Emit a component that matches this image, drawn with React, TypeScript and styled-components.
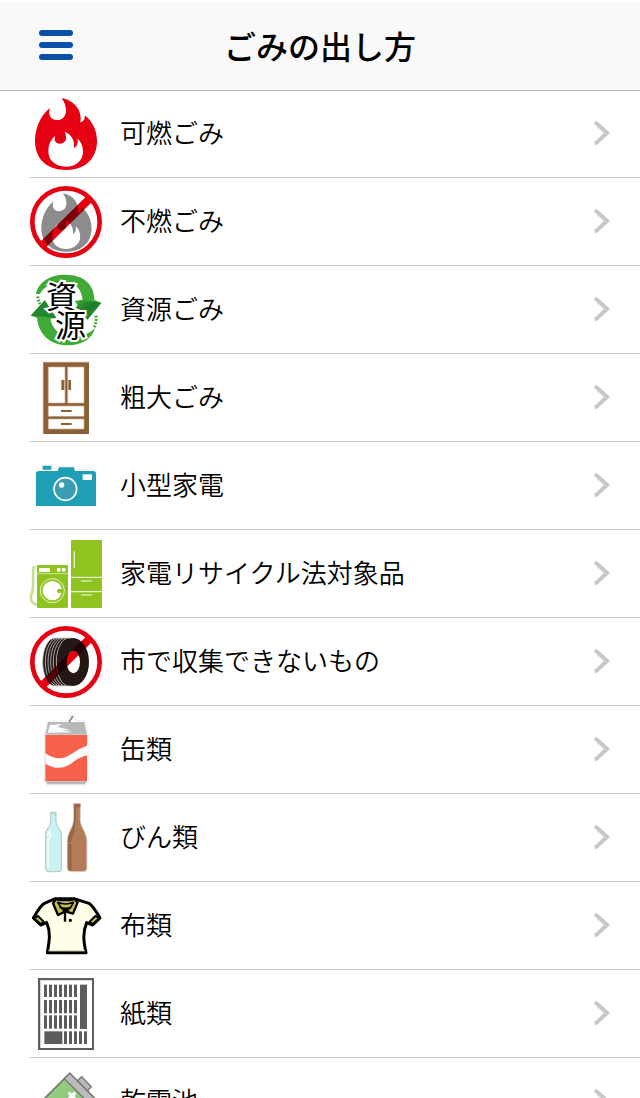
import React from 'react';
import styled, { createGlobalStyle } from 'styled-components';

const GlobalStyle = createGlobalStyle`
  *, *::before, *::after { box-sizing: border-box; }
  body {
    margin: 0;
    background: #fff;
    color: #000;
    font-family: "Noto Sans CJK JP", sans-serif;
  }
`;

const Screen = styled.div`
  display: flex;
  flex-direction: column;
  height: 100vh;
  overflow: hidden;
`;

const Header = styled.header`
  display: grid;
  grid-template-columns: 1fr auto 1fr;
  align-items: center;
  flex: none;
  height: 91px;
  padding: 0 30px 2px;
  background: #f9f9f9;
  border-top: 2px solid #fff;
  border-bottom: 1px solid #b2b2b2;
`;

const MenuButton = styled.button`
  display: flex;
  flex-direction: column;
  gap: 6px;
  width: 52px;
  padding: 9px;
  border: 0;
  background: none;
  cursor: pointer;
`;

const MenuBar = styled.span`
  height: 6px;
  border-radius: 3px;
  background: #0a50a8;
`;

const Title = styled.h1`
  margin: 0;
  font-size: 32px;
  line-height: 48px;
  font-weight: 500;
`;

const List = styled.ul`
  flex: 1;
  min-height: 0;
  margin: -1px 0 0;
  padding: 0 0 0 30px;
  list-style: none;
  overflow-y: auto;
  scrollbar-width: none;
`;

const Row = styled.li`
  border-bottom: 1px solid #c8c7cc;
`;

const RowLink = styled.a`
  display: flex;
  align-items: center;
  gap: 18px;
  padding: 8px 30px 7px 0;
  color: inherit;
  text-decoration: none;
`;

const Picture = styled.svg`
  flex: none;
  width: 72px;
  height: 72px;
  overflow: visible;
  isolation: isolate;
`;

const Label = styled.span`
  flex: 1;
  padding-bottom: 4px;
  font-size: 26px;
  line-height: 40px;
  font-weight: 350;
`;

const Chevron = styled.svg`
  flex: none;
  width: 16px;
  height: 28px;
`;

const Slash = styled.path`
  mix-blend-mode: multiply;
`;

const IconText = styled.text`
  font-family: "Noto Sans CJK JP", sans-serif;
  font-weight: 400;
  paint-order: stroke;
`;

const FLAME =
  'M125 24C163 31 188 62 181 97C190 95 196 88 194 76C216 93 231 120 231 153C231 206 195 240 138 240C80 240 45 206 45 153C45 115 62 75 90 54C83 74 92 90 110 90C128 90 138 78 138 62C138 47 133 37 125 24Z';
const FLAME_CORE =
  'M134 125C152 132 165 149 162 174C171 171 176 158 172 145C183 155 189 168 189 185C189 212 166 230 137 230C106 230 85 211 85 184C85 165 92 148 106 138C100 153 108 161 120 161C132 161 139 152 138 142C138 135 136 130 134 125Z';

const Ban = () => (
  <>
    <Slash d="M67 202L209 62" stroke="#e60012" strokeWidth="24" />
    <circle cx="138" cy="132" r="101" fill="none" stroke="#e60012" strokeWidth="14" />
  </>
);

const Burnable = () => (
  <>
    <path d={FLAME} fill="#e60012" />
    <path d={FLAME_CORE} fill="#fff" />
  </>
);

const NonBurnable = () => (
  <>
    <circle cx="138" cy="132" r="101" fill="#fff" />
    <g transform="translate(27.5 26.5) scale(.81)">
      <path d={FLAME} fill="#8c8c8c" />
      <path d={FLAME_CORE} fill="#fff" />
    </g>
    <Ban />
  </>
);

const Recyclable = () => (
  <>
    <defs>
      <linearGradient id="arrowDown" x1="1" y1="1" x2="0" y2="0">
        <stop offset="0" stopColor="#36a437" />
        <stop offset=".55" stopColor="#1e7a2c" />
        <stop offset="1" stopColor="#3faa36" />
      </linearGradient>
    </defs>
    <path d="M48 84C54 48 92 25 138 26C191 27 223 55 223 101L244 111L203 160L164 105L188 101C184 68 165 49 133 49C99 49 70 62 60 84Z" fill="#3faa36" />
    <path d="M181 102L244 110L203 161L166 128Z" fill="url(#arrowDown)" />
    <path d="M74 103L109 156L91 158C96 187 119 211 153 213C188 214 207 202 225 187C216 220 183 239 143 238C91 237 55 205 51 155L32 149Z" fill="#3faa36" />
    <path d="M74 103L109 156L32 149Z" fill="#22862e" />
    <path d="M54 91Q53 101 60 114M228 149Q230 165 223 184" fill="none" stroke="#3faa36" strokeWidth="9" strokeDasharray="6 4" />
    <IconText x="78" y="126" fontSize="93" fill="#000" stroke="#fff" strokeWidth="12">資</IconText>
    <IconText x="105" y="212" fontSize="93" fill="#000" stroke="#fff" strokeWidth="12">源</IconText>
  </>
);

const Bulky = () => (
  <>
    <path d="M69 24H207V240H69Z" fill="#8c6036" />
    <path d="M70 240V25H207" fill="none" stroke="#b7977a" strokeWidth="3" />
    <path d="M85 39H135V147H85ZM143 39H192V147H143ZM85 156H192V187H85ZM85 195H192V225H85Z" fill="#fff" stroke="#c9b096" strokeWidth="2" />
    <path d="M124 78H133V108H124ZM145 78H153V108H145ZM123 168H155V174H123ZM123 207H155V213H123Z" fill="#8c6036" />
  </>
);

const SmallAppliance = () => (
  <>
    <path d="M48 95Q48 87 57 87H113L117 76H161L165 87H219Q228 87 228 95V192H48ZM68 71H94V83H68Z" fill="#1f9fb6" />
    <path d="M46 92Q47 83 59 83H65V68H97V83H109L113 73H165L169 83H218Q230 84 231 94" fill="none" stroke="#d6e3e5" strokeWidth="1.5" />
    <path d="M188 97H216V114H188Z" fill="#fff" />
    <circle cx="136" cy="141" r="34" fill="#3a9db1" stroke="#fff" strokeWidth="5" />
    <circle cx="125" cy="129" r="8" fill="#fff" />
  </>
);

const HomeAppliance = () => (
  <>
    <path d="M48 112H41C36 145 44 174 34 193C30 209 34 222 52 224" fill="none" stroke="#c5e092" strokeWidth="8" />
    <rect x="51" y="105" width="93" height="129" rx="3" fill="#8fc320" />
    <rect x="153" y="30" width="93" height="204" rx="4" fill="#8fc320" />
    <path d="M57 114H90V126H57Z" fill="#fff" />
    <circle cx="116" cy="119" r="6" fill="#fff" />
    <circle cx="131" cy="119" r="6" fill="#fff" />
    <path d="M51 131H144" stroke="#dbedb5" strokeWidth="2.5" />
    <circle cx="97" cy="182" r="36" fill="none" stroke="#e5f2cc" strokeWidth="3" />
    <circle cx="97" cy="182" r="29" fill="#fff" />
    <path d="M113 177H128V189H113Q109 183 113 177Z" fill="#8fc320" />
    <path d="M163 64V113M153 142H246M153 185H246" fill="none" stroke="#e5f2cc" strokeWidth="4" />
    <path d="M183 153H216M183 195H216" stroke="#d4eaa8" strokeWidth="5" />
  </>
);

const NotCollected = () => (
  <>
    <circle cx="138" cy="132" r="101" fill="#fff" />
    {[105, 113, 121, 129, 137, 146].map((cx) => (
      <ellipse key={cx} cx={cx} cy="132" rx="37" ry="72" fill="#231815" stroke="#c4c1c0" strokeWidth="2.5" />
    ))}
    <ellipse cx="159" cy="132" rx="48" ry="72" fill="#231815" />
    <ellipse cx="160" cy="132" rx="20" ry="34" fill="#fff" />
    <Ban />
  </>
);

const Can = () => (
  <>
    <path d="M82 46L73 84V229L81 237H196L204 229V83L196 45L166 43L163 27L149 30L142 45Z" fill="#fff" stroke="#e4e4e4" strokeWidth="2" />
    <path d="M84 48H193L201 86H76Z" fill="#b9b9ba" />
    <path d="M90 57L124 54L113 63L155 73L122 71L158 79L83 80Z" fill="#fff" />
    <path d="M147 48L159 30" stroke="#888" strokeWidth="5" />
    <path d="M76 87H201V226H76Z" fill="#f7614c" />
    <path d="M76 226H201L195 235H82Z" fill="#b9b9ba" />
    <path d="M76 142C106 163 131 160 154 144Q174 128 201 119V148C174 154 162 169 145 178C122 190 100 187 76 173Z" fill="#fff" />
  </>
);

const Bottles = () => (
  <>
    <path d="M92 319H108V348C109 363 124 369 124 384V490Q123 497 114 497H86Q77 497 77 489V386C77 368 91 363 92 348Z" fill="#c8f3f2" stroke="#b8c1c1" strokeWidth="3" />
    <path d="M160 292H181V342C183 368 201 378 201 407V487Q201 497 190 497H153Q142 497 142 487V406C143 378 160 367 161 340Z" fill="#b37c58" stroke="#dad6d3" strokeWidth="3" />
    <path d="M162 304V341C161 368 143 377 143 407V487Q143 493 155 493V415Q151 403 161 385Q168 366 168 304Z" fill="#986746" />
    <path d="M162 294H181V304H162Z" fill="#9c6847" />
    <path d="M83 391Q82 381 90 377V396L84 401V484" fill="none" stroke="#fff" strokeWidth="4" />
    <path d="M96 324H106V330" fill="none" stroke="#8ccbca" strokeWidth="2" />
    <path d="M143 411H156" stroke="#c69575" strokeWidth="3" />
  </>
);

const Cloth = () => (
  <g stroke="#000" strokeLinejoin="round">
    <path d="M106 50L73 64Q62 70 40 108L62 129L80 122C93 151 88 177 82 212H198C190 175 188 151 200 122L218 129L240 108Q219 72 207 64L162 50Z" fill="#ffffe9" strokeWidth="9" />
    <path d="M54 102L71 119L62 127L42 108ZM226 102L209 119L218 127L238 108Z" fill="#c8bd4c" strokeWidth="6" />
    <path d="M108 51Q137 58 163 51L173 61L159 95L136 88L114 99L99 64Z" fill="#c8bd4c" strokeWidth="7" />
    <path d="M113 61Q137 71 160 61L153 75L137 86L123 76Z" fill="#c8bd4c" strokeWidth="5" />
    <path d="M119 75Q137 82 153 75L138 91Z" fill="#000" strokeWidth="4" />
    <path d="M135 89V119" strokeWidth="7" />
    <circle cx="151" cy="115" r="3" fill="#000" strokeWidth="4" />
    <path d="M85 206H195" stroke="#d8d9bb" strokeWidth="3" />
  </g>
);

const columns = [72, 87, 102, 117, 132, 147, 162];

const Paper = () => (
  <>
    <path d="M57 27H219V237H57Z" fill="#fff" stroke="#5c5c5c" strokeWidth="6" />
    <path d="M62 234V31H215" fill="none" stroke="#b5b5b5" strokeWidth="2" />
    <g fill="#5c5c5c">
      {[44, 90, 136].map((y) =>
        columns.map((x) => <rect key={x + '-' + y} x={x} y={y} width="9" height={y === 44 ? 37 : 40} />),
      )}
      <rect x="180" y="44" width="21" height="133" />
      <rect x="73" y="184" width="54" height="38" />
      {[132, 147, 162, 177, 192].map((x) => (
        <rect key={x} x={x} y="184" width="9" height="38" />
      ))}
    </g>
  </>
);

const Battery = () => (
  <>
    <path d="M172 332L185 320L214 350L202 363Z" fill="#b8b8b8" stroke="#777" strokeWidth="4" />
    <path d="M149 310L225 386L136 475L60 399Z" fill="#90cb7e" stroke="#777" strokeWidth="5" />
    <path d="M149 310L225 386L209 402L133 326Z" fill="#bcbcbc" stroke="#777" strokeWidth="4" />
    <path d="M146 368L166 388M166 368L143 391" stroke="#fff" strokeWidth="10" />
  </>
);

interface Category {
  label: string;
  Drawing: React.ComponentType;
  viewBox?: string;
}

const LOWER = '30 288 216 216';

const categories: Category[] = [
  { label: '可燃ごみ', Drawing: Burnable },
  { label: '不燃ごみ', Drawing: NonBurnable },
  { label: '資源ごみ', Drawing: Recyclable },
  { label: '粗大ごみ', Drawing: Bulky },
  { label: '小型家電', Drawing: SmallAppliance },
  { label: '家電リサイクル法対象品', Drawing: HomeAppliance },
  { label: '市で収集できないもの', Drawing: NotCollected },
  { label: '缶類', Drawing: Can },
  { label: 'びん類', Drawing: Bottles, viewBox: LOWER },
  { label: '布類', Drawing: Cloth },
  { label: '紙類', Drawing: Paper },
  { label: '乾電池', Drawing: Battery, viewBox: LOWER },
];

export default function App() {
  return (
    <Screen>
      <GlobalStyle />
      <Header>
        <MenuButton type="button" aria-label="メニュー">
          <MenuBar />
          <MenuBar />
          <MenuBar />
        </MenuButton>
        <Title>ごみの出し方</Title>
      </Header>
      <List>
        {categories.map(({ label, Drawing, viewBox = '30 24 216 216' }) => (
          <Row key={label}>
            <RowLink href="#">
              <Picture viewBox={viewBox} aria-hidden="true">
                <Drawing />
              </Picture>
              <Label>{label}</Label>
              <Chevron viewBox="0 0 16 28" aria-hidden="true">
                <path d="M1 2L13 13L1 24" fill="none" stroke="#c7c7cc" strokeWidth="4" />
              </Chevron>
            </RowLink>
          </Row>
        ))}
      </List>
    </Screen>
  );
}
